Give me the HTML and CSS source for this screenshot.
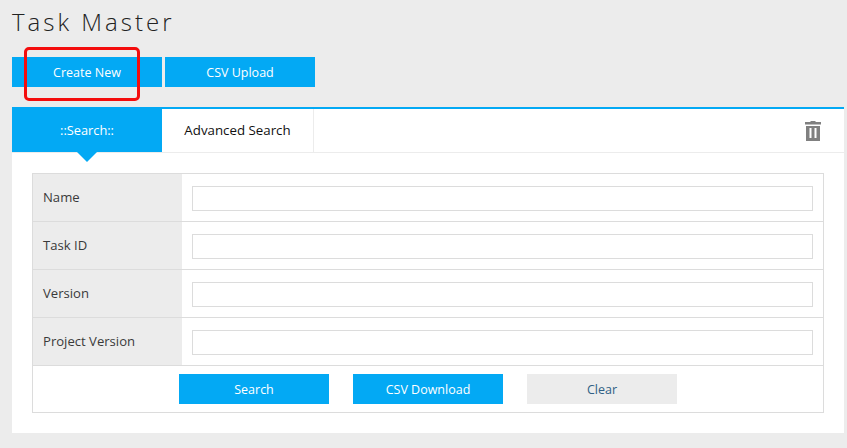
FILE: index.html
```html
<!DOCTYPE html>
<html>
<head>
<title>Task Master</title>
<link rel="stylesheet" href="styles.css">
</head>
<body>
<h1 class="title">Task Master</h1>
<div class="actions">
  <a class="btn btn-blue">Create New</a>
  <a class="btn btn-blue">CSV Upload</a>
  <span class="annotation"></span>
</div>
<div class="panel">
  <div class="tabs">
    <a class="tab tab-active">::Search::</a>
    <a class="tab">Advanced Search</a>
    <div class="tab-tools">
      <svg class="trash" width="16" height="20" viewBox="0 0 16 20">
        <path d="M5.5 1V0h5v1H16v2.5H0V1z" fill="#808080"/>
        <path d="M1 5h14v15H1z M4.5 7v10h2V7z M9.5 7v10h2V7z" fill="#808080" fill-rule="evenodd"/>
      </svg>
    </div>
  </div>
  <div class="panel-body">
    <div class="search-form">
      <div class="row">
        <label class="row-label">Name</label>
        <div class="row-field"><input class="text-input" type="text"></div>
      </div>
      <div class="row">
        <label class="row-label">Task ID</label>
        <div class="row-field"><input class="text-input" type="text"></div>
      </div>
      <div class="row">
        <label class="row-label">Version</label>
        <div class="row-field"><input class="text-input" type="text"></div>
      </div>
      <div class="row">
        <label class="row-label">Project Version</label>
        <div class="row-field"><input class="text-input" type="text"></div>
      </div>
      <div class="form-buttons">
        <a class="btn btn-blue">Search</a>
        <a class="btn btn-blue">CSV Download</a>
        <a class="btn btn-grey">Clear</a>
      </div>
    </div>
  </div>
</div>
</body>
</html>
```

FILE: styles.css
```css
html, body {
  height: 100%;
}

body {
  margin: 0;
  padding: 0 3px 15px 12px;
  box-sizing: border-box;
  background: #ececec;
  color: #3a3a3a;
  font-family: "Open Sans", "Noto Sans", sans-serif;
  font-size: 13px;
  overflow: hidden;
}

.title {
  margin: 0;
  height: 57px;
  padding-top: 5px;
  box-sizing: border-box;
  font-family: "Open Sans", sans-serif;
  font-size: 24px;
  font-weight: 300;
  line-height: 33px;
  letter-spacing: 3px;
  color: #222222;
}

.actions {
  position: relative;
  display: flex;
  gap: 3px;
  height: 30px;
  margin-bottom: 20px;
}

.btn {
  display: block;
  width: 150px;
  height: 30px;
  line-height: 32px;
  text-align: center;
  font-size: 12.5px;
}

.btn-blue {
  background: #03a9f4;
  color: #ffffff;
}

.btn-grey {
  background: #ececec;
  color: #2f5f85;
}

.annotation {
  position: absolute;
  left: 12px;
  top: -10px;
  width: 110px;
  height: 48px;
  border: 3px solid #f40d0d;
  border-radius: 5px;
}

.panel {
  background: #ffffff;
  border-top: 2px solid #03a9f4;
  height: 326px;
  box-sizing: border-box;
}

.tabs {
  display: flex;
  height: 44px;
  border-bottom: 1px solid #ececec;
  box-sizing: border-box;
}

.tab {
  position: relative;
  width: 151px;
  height: 43px;
  line-height: 43px;
  text-align: center;
  font-size: 13.3px;
  border-right: 1px solid #ececec;
  color: #111111;
}

.tab-active {
  width: 150px;
  background: #03a9f4;
  color: #ffffff;
  border-right: none;
  font-size: 12.8px;
}

.tab-active::after {
  content: "";
  position: absolute;
  left: 65px;
  top: 43px;
  border-left: 10px solid transparent;
  border-right: 10px solid transparent;
  border-top: 10px solid #03a9f4;
}

.tab-tools {
  margin-left: auto;
  padding: 12px 23px 0 0;
}

.trash {
  display: block;
}

.panel-body {
  padding: 20px 20px 0;
}

.search-form {
  border: 1px solid #dcdcdc;
}

.row {
  display: flex;
  height: 48px;
  border-bottom: 1px solid #dcdcdc;
  box-sizing: border-box;
}

.row-label {
  width: 149px;
  padding-left: 10px;
  box-sizing: border-box;
  background: #ececec;
  line-height: 47px;
  font-size: 13.1px;
}

.row-field {
  flex: 1;
  padding: 12px 10px 0;
}

.text-input {
  display: block;
  width: 100%;
  height: 25px;
  margin: 0;
  box-sizing: border-box;
  border: 1px solid #dcdcdc;
  background: #ffffff;
}

.form-buttons {
  display: flex;
  justify-content: center;
  gap: 24px;
  padding: 8px 0;
  height: 46px;
  box-sizing: border-box;
}
```
